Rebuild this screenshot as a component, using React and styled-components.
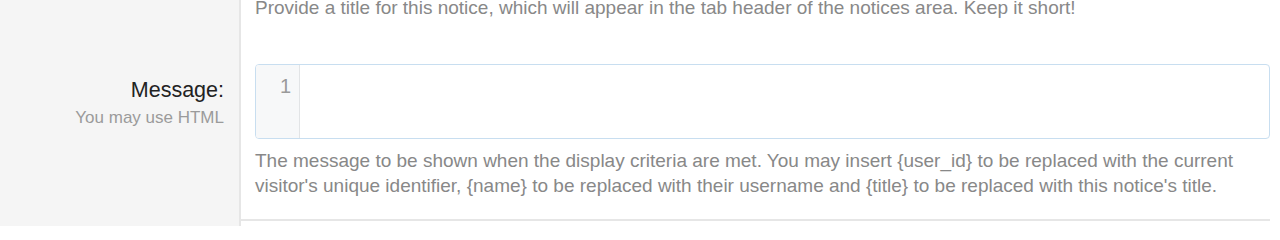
import React from "react";
import styled, {createGlobalStyle} from "styled-components";

const GlobalStyle = createGlobalStyle`
  html, body {
    margin: 0;
    padding: 0;
    background: #ffffff;
    font-family: "Liberation Sans", Arial, Helvetica, sans-serif;
  }
`;

const Form = styled.div`
  width: 1280px;
  height: 226px;
  overflow: hidden;
`;

const Row = styled.div`
  display: grid;
  grid-template-columns: 241px 1fr;
`;

const LabelCell = styled.div`
  background: #f5f5f5;
  border-right: 2px solid #e6e6e6;
  padding: ${(p) => p.$top || 0}px 15px 0 0;
  text-align: right;
`;

const ContentCell = styled.div`
  padding: ${(p) => p.$top || 0}px 10px ${(p) => p.$bottom || 0}px 14px;
`;

const Label = styled.div`
  font-size: 21.5px;
  line-height: 25px;
  color: #222222;
  margin-top: 14px;
`;

const Hint = styled.div`
  font-size: 17px;
  line-height: 20px;
  color: #9b9b9b;
  margin-top: 5px;
`;

const Explain = styled.p`
  margin: ${(p) => p.$offset || 0}px 0 0;
  font-size: 19px;
  line-height: 25px;
  color: #888888;
`;

const Editor = styled.div`
  display: flex;
  height: 73px;
  border: 1px solid #c8def0;
  border-radius: 4px;
  overflow: hidden;
  background: #ffffff;
`;

const Gutter = styled.div`
  width: 44px;
  background: #f7f8f9;
  border-right: 1px solid #e2e4e6;
  padding: 9px 8px 0 0;
  box-sizing: border-box;
  text-align: right;
  font-size: 20px;
  line-height: 25px;
  color: #9a9a9a;
`;

const Code = styled.div`
  flex: 1;
`;

const Separator = styled.hr`
  margin: 21px 0 0 -14px;
  border: none;
  border-top: 2px solid #e6e6e6;
`;

export default function App() {
    return (
        <>
            <GlobalStyle/>
            <Form>
                <Row>
                    <LabelCell/>
                    <ContentCell $bottom={20}>
                        <Explain $offset={-5}>
                            Provide a title for this notice, which will appear in the tab header of the notices area. Keep it short!
                        </Explain>
                    </ContentCell>
                </Row>
                <Row>
                    <LabelCell $top={24}>
                        <Label>Message:</Label>
                        <Hint>You may use HTML</Hint>
                    </LabelCell>
                    <ContentCell $top={24}>
                        <Editor>
                            <Gutter>1</Gutter>
                            <Code/>
                        </Editor>
                        <Explain $offset={9}>
                            The message to be shown when the display criteria are met. You may insert {"{user_id}"} to be
                            replaced with the current visitor's unique identifier, {"{name}"} to be replaced with their
                            username and {"{title}"} to be replaced with this notice's title.
                        </Explain>
                        <Separator/>
                    </ContentCell>
                </Row>
                <Row>
                    <LabelCell $top={20}/>
                    <ContentCell $top={20}/>
                </Row>
            </Form>
        </>
    );
}
